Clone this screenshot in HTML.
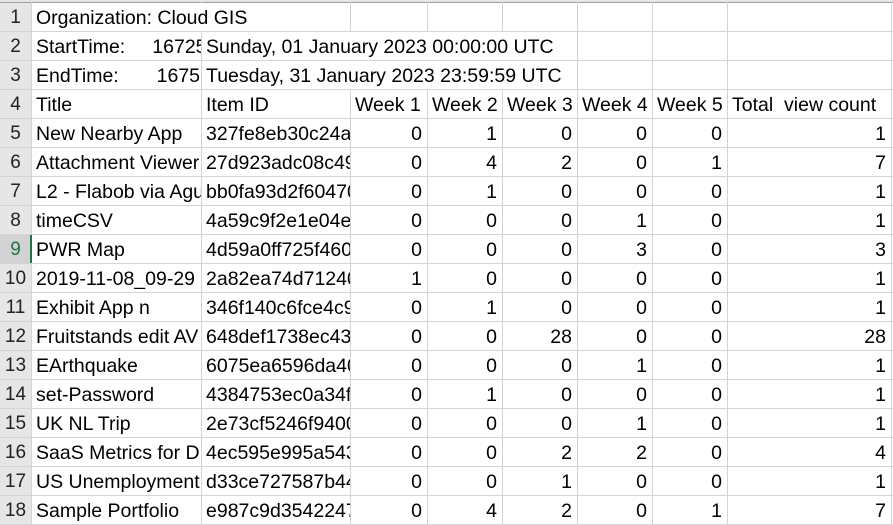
<!DOCTYPE html>
<html><head><meta charset="utf-8"><style>
body{margin:0;width:893px;height:524px;overflow:hidden;background:#fff;font-family:"Liberation Sans",Arial,sans-serif;font-size:19.5px;color:#000;position:relative}
.hl{position:absolute;left:0;width:893px;height:1px;background:#d4d4d4}
.vl{position:absolute;top:2px;height:522px;width:1px;background:#d4d4d4}
.rh{position:absolute;left:0;width:31px;height:28px;background:#e6e6e6;text-align:center;line-height:29px;color:#222;font-size:19px}
.c{position:absolute;height:28px;line-height:30px;white-space:nowrap;overflow:hidden;background:#fff;box-sizing:border-box}
.n{text-align:right}
</style></head><body>
<div style="position:absolute;left:0;top:0;width:893px;height:2px;background:#e6e6e6"></div>
<div style="position:absolute;left:0;top:2px;width:893px;height:1px;background:#a0a0a0"></div>
<div id="g"></div>
<script>
(function(){
var cols=[31,201,350,427,502,577,652,727,891];
var rows=[
["Organization: Cloud GIS"],
["StartTime:&nbsp;&nbsp;&nbsp;&nbsp;&nbsp;1672531200","Sunday, 01 January 2023 00:00:00 UTC"],
["EndTime:&nbsp;&nbsp;&nbsp;&nbsp;&nbsp;&nbsp;&nbsp;1675209599","Tuesday, 31 January 2023 23:59:59 UTC"],
["Title","Item ID","Week 1","Week 2","Week 3","Week 4","Week 5","Total&nbsp; view count"],
["New Nearby App","327fe8eb30c24a00",0,1,0,0,0,1],
["Attachment Viewer","27d923adc08c4900",0,4,2,0,1,7],
["L2 - Flabob via Agu","bb0fa93d2f604700",0,1,0,0,0,1],
["timeCSV","4a59c9f2e1e04e00",0,0,0,1,0,1],
["PWR Map","4d59a0ff725f4600",0,0,0,3,0,3],
["2019-11-08_09-29","2a82ea74d7124000",1,0,0,0,0,1],
["Exhibit App n","346f140c6fce4c90",0,1,0,0,0,1],
["Fruitstands edit AV","648def1738ec4300",0,0,28,0,0,28],
["EArthquake","6075ea6596da4000",0,0,0,1,0,1],
["set-Password","4384753ec0a34f00",0,1,0,0,0,1],
["UK NL Trip","2e73cf5246f94000",0,0,0,1,0,1],
["SaaS Metrics for D","4ec595e995a54300",0,0,2,2,0,4],
["US Unemployment","d33ce727587b4400",0,0,1,0,0,1],
["Sample Portfolio","e987c9d354224700",0,4,2,0,1,7]];
var h="";
for(var i=0;i<cols.length;i++)h+='<div class="vl" style="left:'+cols[i]+'px"></div>';
for(var r=0;r<18;r++){
 var ty=3+r*29;
 h+='<div class="hl" style="top:'+(ty+28)+'px"></div>';
 var sel=r==8;
 h+='<div class="rh" style="top:'+ty+'px;'+(sel?'background:#d2d2d2;color:#217346;':'')+'">'+(r+1)+'</div>';
 if(sel)h+='<div style="position:absolute;left:30px;top:'+ty+'px;width:2px;height:28px;background:#217346"></div>';
 var row=rows[r];
 for(var c=0;c<row.length;c++){
  var x=cols[c]+1,w=cols[c+1]-cols[c]-1;
  var isNum=typeof row[c]=="number";
  if(r==0&&c==0)w=cols[2]-x;
  if((r==1||r==2)&&c==1)w=cols[5]-x;
  h+='<div class="c'+(isNum?' n':'')+'" style="top:'+ty+'px;left:'+x+'px;width:'+w+'px;padding-left:'+(isNum?0:4)+'px;padding-right:'+(isNum?5:0)+'px">'+row[c]+'</div>';
 }
}
document.getElementById("g").innerHTML=h;
})();
</script>
</body></html>
